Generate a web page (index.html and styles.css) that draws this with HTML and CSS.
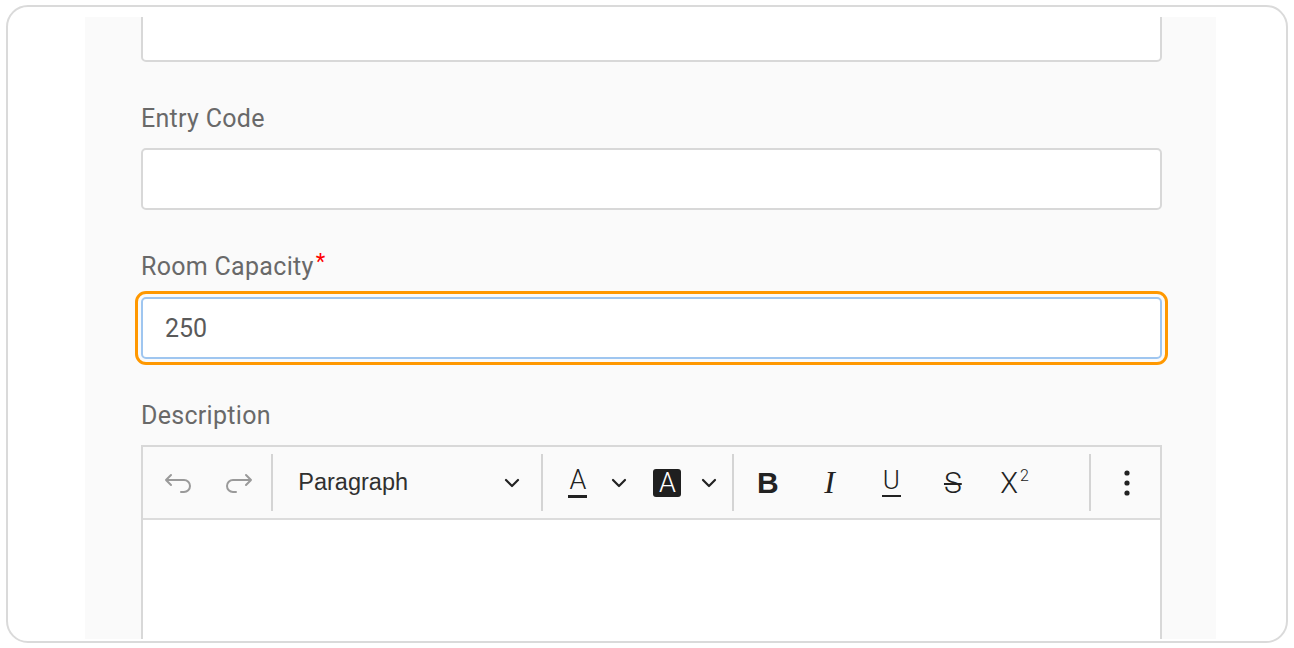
FILE: index.html
```html
<!DOCTYPE html>
<html lang="en">
<head>
<meta charset="utf-8">
<title>Room details</title>
<link rel="stylesheet" href="styles.css">
</head>
<body>
<div class="frame">
  <div class="panel">
    <form class="form">
      <div class="field field-first">
        <input class="text-input" type="text">
      </div>
      <div class="field">
        <label class="label">Entry Code</label>
        <input class="text-input" type="text">
      </div>
      <div class="field">
        <label class="label">Room Capacity<span class="req">*</span></label>
        <input class="text-input is-focused" type="text" value="250">
      </div>
      <div class="field">
        <label class="label">Description</label>
        <div class="editor">
          <div class="toolbar">
            <button type="button" class="tb tb-hist" aria-label="Undo">
              <svg width="32" height="20" viewBox="0 0 32 20"><path d="M8 2 L3 7 L8 12 M3 7 H21 A6 6 0 0 1 21 19 H18" fill="none" stroke="#9a9a9a" stroke-width="2" stroke-linecap="round" stroke-linejoin="round"/></svg>
            </button>
            <button type="button" class="tb tb-hist" aria-label="Redo">
              <svg width="32" height="20" viewBox="0 0 32 20"><path d="M24 2 L29 7 L24 12 M29 7 H11 A6 6 0 0 0 11 19 H14" fill="none" stroke="#9a9a9a" stroke-width="2" stroke-linecap="round" stroke-linejoin="round"/></svg>
            </button>
            <span class="sep"></span>
            <button type="button" class="tb tb-block">
              <span class="block-name">Paragraph</span>
              <svg class="chev" width="16" height="10" viewBox="0 0 16 10"><path d="M2 2 L8 8 L14 2" fill="none" stroke="#222" stroke-width="2.2" stroke-linecap="round" stroke-linejoin="round"/></svg>
            </button>
            <span class="sep"></span>
            <button type="button" class="tb tb-color" aria-label="Font color">
              <span class="glyph-a">A</span>
            </button>
            <button type="button" class="tb tb-arrow" aria-label="More colors">
              <svg width="16" height="10" viewBox="0 0 16 10"><path d="M2 2 L8 8 L14 2" fill="none" stroke="#222" stroke-width="2.2" stroke-linecap="round" stroke-linejoin="round"/></svg>
            </button>
            <button type="button" class="tb tb-bg" aria-label="Background color">
              <span class="glyph-box">A</span>
            </button>
            <button type="button" class="tb tb-arrow" aria-label="More background colors">
              <svg width="16" height="10" viewBox="0 0 16 10"><path d="M2 2 L8 8 L14 2" fill="none" stroke="#222" stroke-width="2.2" stroke-linecap="round" stroke-linejoin="round"/></svg>
            </button>
            <span class="sep sep-wide"></span>
            <button type="button" class="tb tb-fmt" aria-label="Bold"><span class="g-bold">B</span></button>
            <button type="button" class="tb tb-fmt" aria-label="Italic"><span class="g-italic">I</span></button>
            <button type="button" class="tb tb-fmt" aria-label="Underline"><span class="g-under">U</span></button>
            <button type="button" class="tb tb-fmt" aria-label="Strikethrough"><span class="g-strike">S</span></button>
            <button type="button" class="tb tb-fmt" aria-label="Superscript"><span class="g-sup">X<sup>2</sup></span></button>
            <span class="sep sep-end"></span>
            <button type="button" class="tb tb-more" aria-label="More">
              <svg width="8" height="28" viewBox="0 0 8 28"><circle cx="4" cy="4" r="2.6" fill="#222"/><circle cx="4" cy="14" r="2.6" fill="#222"/><circle cx="4" cy="24" r="2.6" fill="#222"/></svg>
            </button>
          </div>
          <div class="editor-body"></div>
        </div>
      </div>
    </form>
  </div>
</div>
</body>
</html>
```

FILE: styles.css
```css
html, body {
  margin: 0;
  padding: 0;
  background: #ffffff;
}

body {
  padding: 5px 6px 5px 6px;
  height: 648px;
  box-sizing: border-box;
  font-family: Roboto, "Liberation Sans", sans-serif;
}

.frame {
  height: 100%;
  box-sizing: border-box;
  border: 2px solid #dadada;
  border-radius: 22px;
  padding: 10px 70px 2px 77px;
  overflow: hidden;
}

.panel {
  height: 100%;
  background: #fafafa;
  overflow: hidden;
  padding: 0 54px 0 56px;
}

/* the list is scrolled so the first field's input is cut off at the top */
.form {
  margin-top: -17px;
}

.field {
  display: flex;
  flex-direction: column;
  margin-bottom: 43px;
}

.label {
  font-size: 25px;
  line-height: 28px;
  letter-spacing: 0.3px;
  color: #696969;
  margin-bottom: 15px;
}

.req {
  color: #f00;
  font-size: 22px;
  position: relative;
  top: -6px;
  margin-left: 2px;
}

.text-input {
  display: block;
  box-sizing: border-box;
  width: 100%;
  height: 62px;
  margin: 0;
  border: 2px solid #d8d8d8;
  border-radius: 5px;
  background: #ffffff;
  padding: 0 22px;
  font-family: Roboto, "Liberation Sans", sans-serif;
  font-size: 25px;
  color: #5a5a5a;
  outline: none;
}

.is-focused {
  border-color: #9fc6f0;
  outline: 3px solid #ff9800;
  outline-offset: 3px;
}

.editor {
  border: 2px solid #d8d8d8;
  border-bottom: none;
  background: #ffffff;
}

.toolbar {
  display: flex;
  align-items: center;
  height: 71px;
  padding-left: 6px;
  background: #fafafa;
  border-bottom: 2px solid #dcdcdc;
}

.tb {
  display: flex;
  align-items: center;
  justify-content: center;
  height: 56px;
  padding: 0;
  border: none;
  background: transparent;
  color: #222;
  font-family: "Liberation Sans", Arial, sans-serif;
}

.tb-hist { width: 60px; }

.sep {
  width: 2px;
  height: 57px;
  background: #d4d4d4;
  margin: 0 3px 0 3px;
}

.sep-wide { margin-left: 12px; }
.sep-end { margin-left: 44px; }

.tb-block {
  width: 263px;
  justify-content: space-between;
  padding: 0 18px 0 22px;
  box-sizing: border-box;
}

.block-name {
  font-size: 23.5px;
  color: #303030;
}

.tb-color { width: 60px; margin-left: 2px; }

.glyph-a {
  display: inline-block;
  font-size: 27px;
  line-height: 25px;
  font-weight: 300;
  font-family: Roboto, sans-serif;
  color: #222;
  padding: 0 1px 2px;
  border-bottom: 3px solid #222;
}

.tb-arrow { width: 22px; }

.tb-bg { width: 62px; margin-left: 7px; }

.glyph-box {
  display: flex;
  align-items: center;
  justify-content: center;
  width: 28px;
  height: 28px;
  border-radius: 3px;
  background: #1f1f1f;
  color: #ffffff;
  font-size: 27px;
  font-weight: 300;
  font-family: Roboto, sans-serif;
  line-height: 28px;
}

.tb-fmt { width: 62px; }

.g-bold {
  font-family: "Liberation Sans", sans-serif;
  font-weight: 700;
  font-size: 30px;
  color: #222;
}

.g-italic {
  font-family: "Liberation Serif", serif;
  font-style: italic;
  font-size: 32px;
  color: #222;
}

.g-under {
  font-family: Roboto, sans-serif;
  font-weight: 300;
  font-size: 26px;
  line-height: 24px;
  color: #222;
  padding: 0 1px 3px;
  border-bottom: 2.5px solid #222;
}

.g-strike {
  font-family: Roboto, sans-serif;
  font-weight: 300;
  font-size: 30px;
  color: #222;
  text-decoration: line-through;
  text-decoration-thickness: 2px;
}

.g-sup {
  font-family: Roboto, sans-serif;
  font-weight: 300;
  font-size: 29px;
  color: #222;
}

.g-sup sup {
  font-size: 16px;
  vertical-align: 12px;
  margin-left: 2px;
}

.tb-more { width: 66px; }

.editor-body {
  height: 200px;
  background: #ffffff;
}
```
